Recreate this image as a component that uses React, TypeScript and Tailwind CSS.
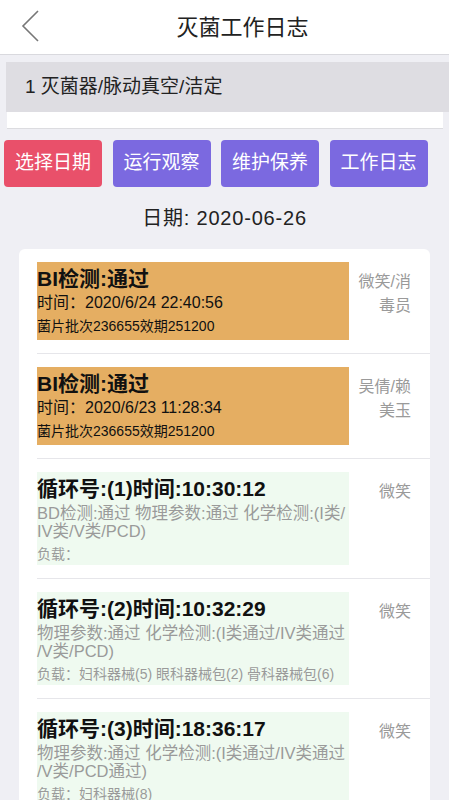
type BiRecord = {
  kind: "bi";
  title: string;
  time: string;
  batch: string;
  operator: string;
};

type CycleRecord = {
  kind: "cycle";
  title: string;
  detail: string;
  load: string;
  operator: string;
};

type LogRecord = BiRecord | CycleRecord;

// \u200B marks where the app's line breaks fall inside the long test strings
const records: LogRecord[] = [
  {
    kind: "bi",
    title: "BI检测:通过",
    time: "时间：2020/6/24 22:40:56",
    batch: "菌片批次236655效期251200",
    operator: "微笑/消毒员",
  },
  {
    kind: "bi",
    title: "BI检测:通过",
    time: "时间：2020/6/23 11:28:34",
    batch: "菌片批次236655效期251200",
    operator: "吴倩/赖美玉",
  },
  {
    kind: "cycle",
    title: "循环号:(1)时间:10:30:12",
    detail: "BD检测:通过 物理参数:通过 化学检测:(I类/\u200BIV类/V类/PCD)",
    load: "负载：",
    operator: "微笑",
  },
  {
    kind: "cycle",
    title: "循环号:(2)时间:10:32:29",
    detail: "物理参数:通过 化学检测:(I类通过/IV类通过\u200B/V类/PCD)",
    load: "负载：妇科器械(5) 眼科器械包(2) 骨科器械包(6)",
    operator: "微笑",
  },
  {
    kind: "cycle",
    title: "循环号:(3)时间:18:36:17",
    detail: "物理参数:通过 化学检测:(I类通过/IV类通过\u200B/V类/PCD通过)",
    load: "负载：妇科器械(8)",
    operator: "微笑",
  },
];

const tabs = [
  { label: "选择日期", active: true },
  { label: "运行观察", active: false },
  { label: "维护保养", active: false },
  { label: "工作日志", active: false },
];

function RecordRow({ record }: { record: LogRecord }) {
  return (
    <div className="ml-[18px] flex border-b border-[#e6e6ea] py-[13px] pr-[19px]">
      {record.kind === "bi" ? (
        <div className="w-[312px] bg-[#e5ae62] pt-[4px] pb-[2px] text-[#111]">
          <div className="text-[21px] font-bold leading-[26px]">{record.title}</div>
          <div className="text-[16px] leading-[22px]">{record.time}</div>
          <div className="text-[14px] leading-[24px]">{record.batch}</div>
        </div>
      ) : (
        <div className="w-[312px] bg-[#effaf0] pt-[4px] pb-[1px]">
          <div className="text-[21px] font-bold leading-[26px] text-[#111]">{record.title}</div>
          <div className="mt-[2px] text-[16.5px] leading-[18px] text-[#9a9a9a]">{record.detail}</div>
          <div className="mt-[4px] text-[14px] leading-[20px] text-[#9a9a9a]">{record.load}</div>
        </div>
      )}
      <div className="ml-auto w-[58px] break-all pt-[8px] text-right text-[16px] leading-[24px] text-[#9a9a9a]">
        {record.operator}
      </div>
    </div>
  );
}

export default function App() {
  return (
    <div
      className="min-h-[800px] w-[449px] overflow-hidden bg-[#efeff4]"
      style={{ fontFamily: '"Liberation Sans", "Noto Sans CJK SC", sans-serif' }}
    >
      {/* Header */}
      <div className="relative flex h-[55px] items-center justify-center border-b border-[#d9d9de] bg-white pl-[36px]">
        <svg className="absolute left-[20px] top-[9px]" width="22" height="34" viewBox="0 0 22 34" fill="none">
          <polyline points="18,2 3,17 18,32" stroke="#777" strokeWidth="1.6" />
        </svg>
        <span className="text-[22px] text-[#222]">灭菌工作日志</span>
      </div>

      {/* Sterilizer */}
      <div className="ml-[6px] mt-[7px] flex h-[50px] items-center bg-[#dedde2] pl-[19px] text-[19px] text-[#222]">
        1 灭菌器/脉动真空/洁定
      </div>
      <div className="ml-[7px] h-[17px] w-[436px] border-b border-[#dcdce0] bg-white" />

      {/* Tabs */}
      <div className="ml-[4px] mt-[11px] flex gap-[10.5px]">
        {tabs.map((tab) => (
          <div
            key={tab.label}
            className={`flex h-[47px] w-[98px] items-center justify-center rounded-[4px] text-[19px] text-white ${
              tab.active ? "bg-[#e9506a]" : "bg-[#7b69e0]"
            }`}
          >
            {tab.label}
          </div>
        ))}
      </div>

      <div className="mt-[18px] text-center text-[20px] leading-[27px] tracking-[0.8px] text-[#222]">
        日期: 2020-06-26
      </div>

      {/* Records */}
      <div className="ml-[19px] mt-[17px] w-[411px] rounded-[6px] bg-white">
        {records.map((record, i) => (
          <RecordRow key={i} record={record} />
        ))}
      </div>
    </div>
  );
}
